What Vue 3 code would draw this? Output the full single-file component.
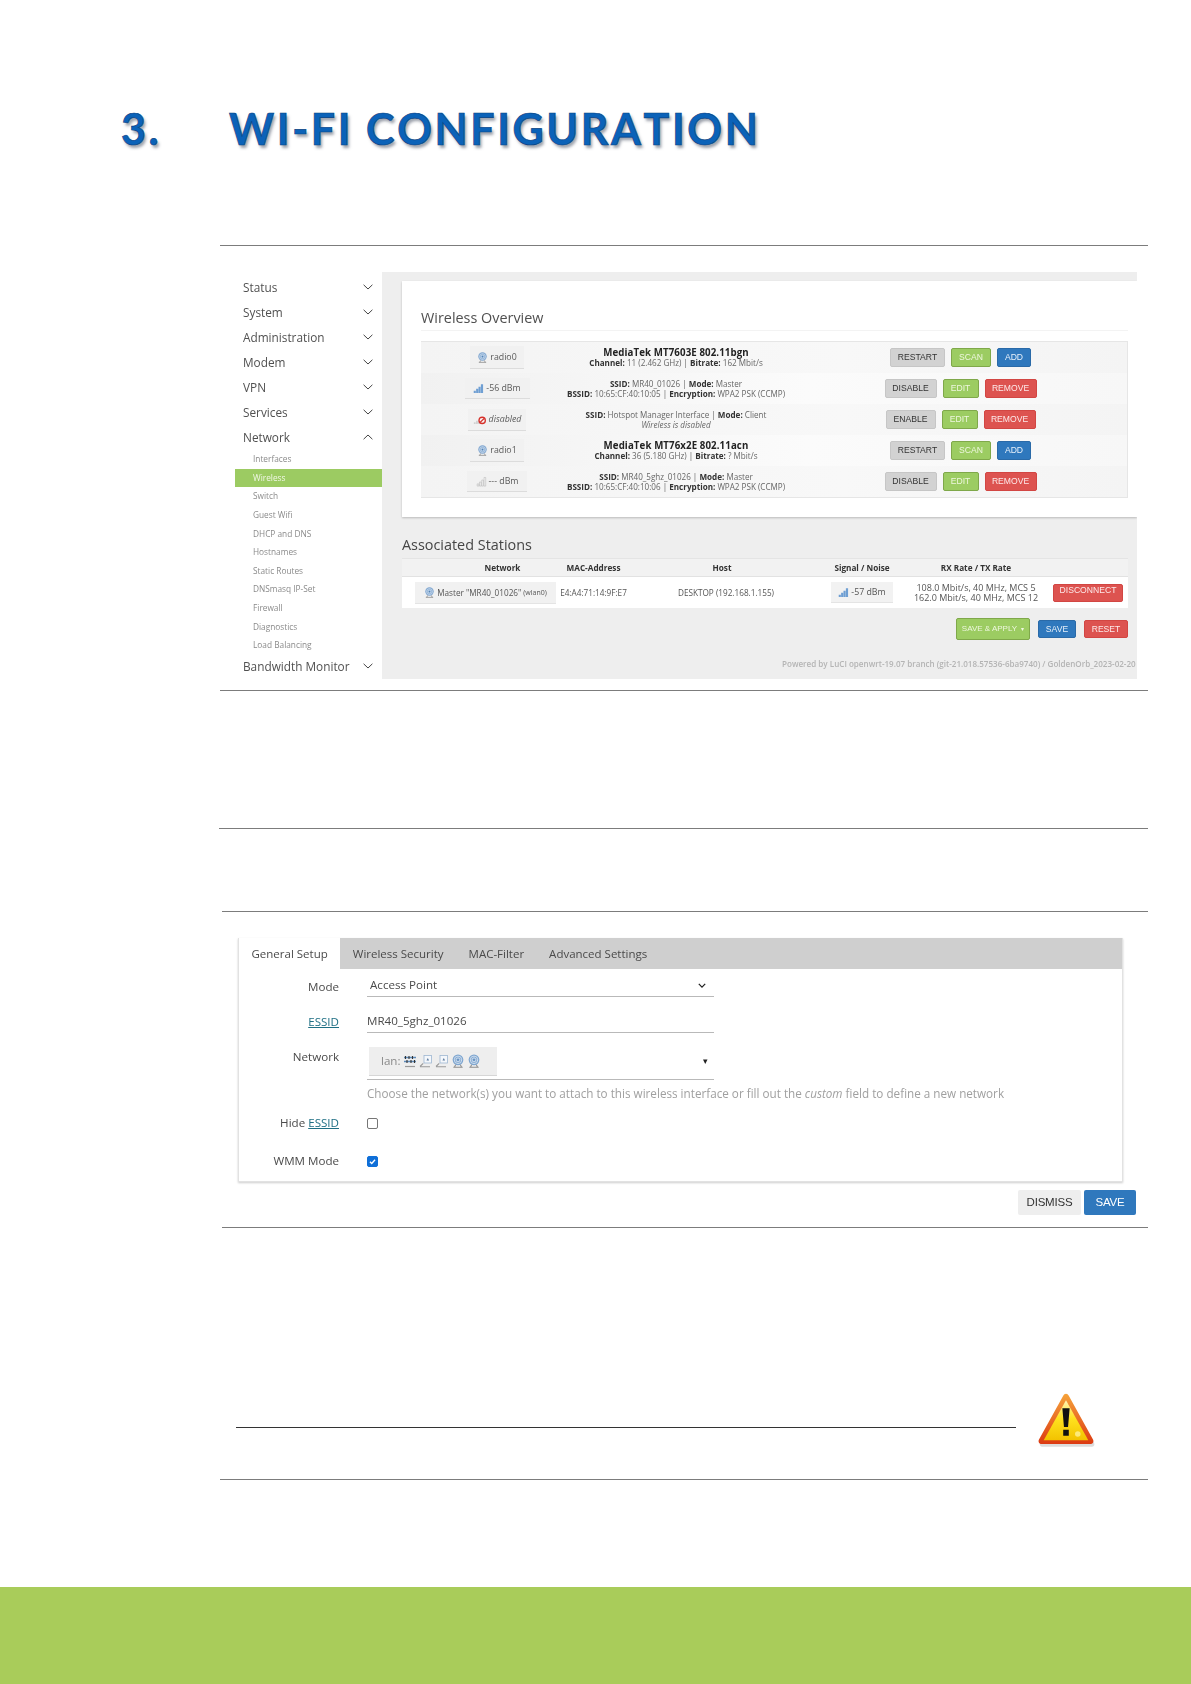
<script setup>
const topMenu = ['Status', 'System', 'Administration', 'Modem', 'VPN', 'Services']
const subMenu = ['Interfaces', 'Wireless', 'Switch', 'Guest Wifi', 'DHCP and DNS', 'Hostnames', 'Static Routes', 'DNSmasq IP-Set', 'Firewall', 'Diagnostics', 'Load Balancing']
const tabs = ['General Setup', 'Wireless Security', 'MAC-Filter', 'Advanced Settings']
const radios = [
  { kind: 'radio', icon: 'i-wifi', label: 'radio0', cls: 'b-radio', title: 'MediaTek MT7603E 802.11bgn', l2: [['Channel:', ' 11 (2.462 GHz) | '], ['Bitrate:', ' 162 Mbit/s']], btns: [['RESTART', 'gray', 55], ['SCAN', 'green', 40], ['ADD', 'blue', 34]] },
  { kind: 'ssid', icon: 'i-sig', label: '-56 dBm', cls: 'b-sig', l1: [['SSID:', ' MR40_01026 | '], ['Mode:', ' Master']], l2: [['BSSID:', ' 10:65:CF:40:10:05 | '], ['Encryption:', ' WPA2 PSK (CCMP)']], btns: [['DISABLE', 'gray', 52], ['EDIT', 'green', 36], ['REMOVE', 'red', 52]] },
  { kind: 'off', icon: 'i-off', label: 'disabled', cls: 'b-off', l1: [['SSID:', ' Hotspot Manager Interface | '], ['Mode:', ' Client']], note: 'Wireless is disabled', btns: [['ENABLE', 'gray', 50], ['EDIT', 'green', 36], ['REMOVE', 'red', 52]] },
  { kind: 'radio', icon: 'i-wifi', label: 'radio1', cls: 'b-radio', title: 'MediaTek MT76x2E 802.11acn', l2: [['Channel:', ' 36 (5.180 GHz) | '], ['Bitrate:', ' ? Mbit/s']], btns: [['RESTART', 'gray', 55], ['SCAN', 'green', 40], ['ADD', 'blue', 34]] },
  { kind: 'ssid', icon: 'i-none', label: '--- dBm', cls: 'b-none', l1: [['SSID:', ' MR40_5ghz_01026 | '], ['Mode:', ' Master']], l2: [['BSSID:', ' 10:65:CF:40:10:06 | '], ['Encryption:', ' WPA2 PSK (CCMP)']], btns: [['DISABLE', 'gray', 52], ['EDIT', 'green', 36], ['REMOVE', 'red', 52]] },
]
const lanIcons = ['i-switch', 'i-eth', 'i-eth', 'i-wifi', 'i-wifi']
</script>

<template>
  <div class="page">
    <svg class="defs" width="0" height="0" aria-hidden="true">
      <defs>
        <linearGradient id="warnFill" x1="0" y1="0" x2="0" y2="1">
          <stop offset="0" stop-color="#fff3b8" />
          <stop offset="0.45" stop-color="#ffe21f" />
          <stop offset="1" stop-color="#f2c200" />
        </linearGradient>
        <linearGradient id="warnEdge" x1="0" y1="0" x2="0" y2="1">
          <stop offset="0" stop-color="#f6a33a" />
          <stop offset="1" stop-color="#dc3a12" />
        </linearGradient>
        <symbol id="i-wifi" viewBox="0 0 12 12">
          <circle cx="6" cy="5" r="4.6" fill="#7fa6d0" />
          <circle cx="6" cy="5" r="3.2" fill="none" stroke="#dfe9f4" stroke-width=".7" />
          <circle cx="6" cy="5" r="1.7" fill="none" stroke="#dfe9f4" stroke-width=".7" />
          <circle cx="6" cy="5" r=".6" fill="#4c7cae" />
          <path d="M4 9.2 3 11.2M8 9.2l1 2M2 11.3h8" stroke="#8f8f8f" stroke-width=".9" fill="none" />
        </symbol>
        <symbol id="i-sig" viewBox="0 0 12 12">
          <path d="M.8 11V8.4h2.300V11zM3.400 11V6.400h2.300V11zM6 11V4.200h2.300V11zM8.600 11V1.400h2.400V11z" fill="#6f9fd3" />
        </symbol>
        <symbol id="i-none" viewBox="0 0 12 12">
          <path d="M1.300 11V8.600h1.800V11zM3.800 11V6.600h1.800V11zM6.300 11V4.400h1.800V11zM8.800 11V1.600h1.800V11z" fill="#f4f4f4" stroke="#b5b5b5" stroke-width=".6" />
        </symbol>
        <symbol id="i-off" viewBox="0 0 16 12">
          <path d="M1 11V9h2v2zM3.500 11V7.500h2V11zM6 11V6h2v5z" fill="#cfcfcf" />
          <circle cx="10.500" cy="7" r="3.600" fill="#f7f7f7" stroke="#d6302a" stroke-width="1.500" />
          <path d="M8 9.400l5-4.800" stroke="#d6302a" stroke-width="1.300" />
        </symbol>
        <symbol id="i-switch" viewBox="0 0 14 14">
          <path d="M1 3.500h12M1 7.500h12" stroke="#5f8cba" stroke-width="1.400" />
          <path d="M2.500 2v3M6 2v3M9.500 2v3M4 6v3M8 6v3M11.500 6v3" stroke="#333" stroke-width="1.100" />
          <path d="M2 12.500h10" stroke="#9a9a9a" stroke-width="1.200" />
        </symbol>
        <symbol id="i-eth" viewBox="0 0 14 14">
          <rect x="5" y="1.500" width="7.500" height="7.500" fill="#f4f7fb" stroke="#9db6d2" stroke-width=".8" />
          <path d="M7.500 6.500l1.300-2.500 1.300 2.500z" fill="#5f7da0" />
          <path d="M1 12.500l3.200-3.200M1 12.800h10" stroke="#9a9a9a" stroke-width="1.100" />
        </symbol>
      </defs>
    </svg>

    <h1 class="heading"><span class="heading-no">3.</span><span>WI-FI CONFIGURATION</span></h1>
    <div class="rule"></div>

    <section class="shot-one">
      <aside class="side">
        <div v-for="m in topMenu" :key="m" class="top-item">
          <span>{{ m }}</span>
          <svg class="chev" viewBox="0 0 10 6"><path d="M.6.8 5 5 9.400.8" /></svg>
        </div>
        <div class="top-item">
          <span>Network</span>
          <svg class="chev" viewBox="0 0 10 6"><path d="M.6 5.200 5 1l4.400 4.200" /></svg>
        </div>
        <div class="subs">
          <div v-for="s in subMenu" :key="s" class="sub-item" :class="{ active: s === 'Wireless' }">{{ s }}</div>
        </div>
        <div class="top-item">
          <span>Bandwidth Monitor</span>
          <svg class="chev" viewBox="0 0 10 6"><path d="M.6.8 5 5 9.400.8" /></svg>
        </div>
      </aside>

      <main class="main">
        <div class="card">
          <h2 class="card-title">Wireless Overview</h2>
          <div class="radio-table">
            <div v-for="(r, i) in radios" :key="i" class="radio-row">
              <div class="cell-badge">
                <span class="badge" :class="r.cls">
                  <svg class="badge-icon" :class="{ wide: r.kind === 'off' }"><use :href="'#' + r.icon" /></svg>
                  <span :class="{ em: r.kind === 'off' }">{{ r.label }}</span>
                </span>
              </div>
              <div class="cell-info">
                <div v-if="r.title" class="radio-name">{{ r.title }}</div>
                <div v-else class="info-line"><template v-for="p in r.l1" :key="p[0]"><b>{{ p[0] }}</b>{{ p[1] }}</template></div>
                <div v-if="r.l2" class="info-line"><template v-for="p in r.l2" :key="p[0]"><b>{{ p[0] }}</b>{{ p[1] }}</template></div>
                <div v-if="r.note" class="info-line em">{{ r.note }}</div>
              </div>
              <div class="cell-actions">
                <span v-for="b in r.btns" :key="b[0]" class="btn" :class="b[1]" :style="{ width: b[2] + 'px' }">{{ b[0] }}</span>
              </div>
            </div>
          </div>
        </div>

        <h2 class="assoc-title">Associated Stations</h2>
        <div class="assoc">
          <div class="assoc-head">
            <span class="c-net">Network</span>
            <span class="c-mac">MAC-Address</span>
            <span class="c-host">Host</span>
            <span class="c-sig">Signal / Noise</span>
            <span class="c-rate">RX Rate / TX Rate</span>
            <span></span>
          </div>
          <div class="assoc-row">
            <span class="c-station"><span class="master"><svg class="badge-icon"><use href="#i-wifi" /></svg>Master "MR40_01026" <small>(wlan0)</small></span></span>
            <span class="c-mac">E4:A4:71:14:9F:E7</span>
            <span class="c-host host-value">DESKTOP (192.168.1.155)</span>
            <span class="c-sig"><span class="sig-box"><svg class="badge-icon"><use href="#i-sig" /></svg>-57 dBm</span></span>
            <span class="c-rate rates">108.0 Mbit/s, 40 MHz, MCS 5<br />162.0 Mbit/s, 40 MHz, MCS 12</span>
            <span class="c-disc"><span class="btn red disc">DISCONNECT</span></span>
          </div>
        </div>
        <div class="page-actions">
          <span class="btn green apply">SAVE &amp; APPLY <i class="caret">▾</i></span>
          <span class="btn blue act-save">SAVE</span>
          <span class="btn red act-reset">RESET</span>
        </div>
        <div class="powered">Powered by LuCI openwrt-19.07 branch (git-21.018.57536-6ba9740) / GoldenOrb_2023-02-20</div>
      </main>
    </section>

    <div class="rule r2"></div>
    <div class="rule r3"></div>
    <div class="rule r4"></div>

    <section class="shot-two">
      <div class="panel">
        <div class="tabs">
          <span v-for="(t, i) in tabs" :key="t" class="tab" :class="{ current: i === 0 }">{{ t }}</span>
        </div>
        <div class="form">
          <div class="f-row mode">
            <label>Mode</label>
            <div class="field"><span>Access Point</span>
              <svg class="sel-chev" viewBox="0 0 10 6"><path d="M1 1l4 4 4-4" /></svg>
            </div>
          </div>
          <div class="f-row essid">
            <label><u>ESSID</u></label>
            <div class="field plain">MR40_5ghz_01026</div>
          </div>
          <div class="f-row network">
            <label>Network</label>
            <div class="field net-field">
              <span class="lan-box">lan:<svg v-for="(ic, i) in lanIcons" :key="i" class="lan-icon"><use :href="'#' + ic" /></svg></span>
              <i class="net-caret">▾</i>
            </div>
          </div>
          <div class="help">Choose the network(s) you want to attach to this wireless interface or fill out the <em>custom</em> field to define a new network</div>
          <div class="f-row check hide">
            <label>Hide <u>ESSID</u></label>
            <span class="cb"></span>
          </div>
          <div class="f-row check wmm">
            <label>WMM Mode</label>
            <span class="cb on"><svg viewBox="0 0 12 12"><path d="M2.600 6.200 5 8.600l4.400-5" /></svg></span>
          </div>
        </div>
      </div>
      <div class="modal-actions">
        <span class="m-btn dismiss">DISMISS</span>
        <span class="m-btn save">SAVE</span>
      </div>
    </section>

    <div class="rule r5"></div>

    <div class="warn-row">
      <div class="warn-line"></div>
      <svg class="warn" viewBox="0 0 56 56">
        <path d="M28 4 53 47a2.500 2.500 0 0 1-2.200 4H5.200A2.500 2.500 0 0 1 3 47z" fill="#b9b9b9" opacity=".5" transform="translate(1 2)" />
        <path d="M28 3.500c1.200 0 2 .7 2.600 1.800l22.600 41c1 2 0 4.200-2.400 4.200H5.200c-2.400 0-3.400-2.200-2.400-4.200l22.600-41c.6-1.100 1.400-1.800 2.600-1.800z" fill="url(#warnEdge)" />
        <path d="M28 9.500 48.800 47H7.200z" fill="url(#warnFill)" />
        <path d="M24.600 17h6.800l-1.500 17.500h-3.800zM25.400 37h5.200v5.600h-5.200z" fill="#111" />
        <circle cx="39" cy="41" r="2.600" fill="#fff6a8" opacity=".7" />
      </svg>
    </div>

    <div class="rule r6"></div>
    <footer class="band"></footer>
  </div>
</template>

<style scoped>
.page { width: 1191px; height: 1684px; overflow: hidden; background: #fff; display: flex; flex-direction: column; font-family: "Open Sans", "Liberation Sans", sans-serif; color: #444; }
.defs { display: block; height: 0; width: 0; }

.heading { margin: 0; padding: 104px 0 0 121px; height: 245px; flex: none; box-sizing: border-box; display: flex; font: 700 43px/50px Lato, "Open Sans", sans-serif; letter-spacing: 2.6px; font-kerning: none; color: #0b62b8; -webkit-text-stroke: .7px #0a4486; text-shadow: 2px 3px 3px rgba(60, 70, 90, .5); }
.heading-no { width: 108px; }

.rule { height: 1px; background: #7c7c7c; margin-left: 220px; width: 928px; flex: none; }
.r2 { margin-top: 11px; }
.r3 { margin-top: 137px; margin-left: 219px; width: 929px; }
.r4 { margin-top: 82px; margin-left: 222px; width: 926px; }
.r5 { margin-top: 12px; margin-left: 222px; width: 926px; }
.r6 { margin-top: 30px; }

.shot-one { margin: 26px 0 0 235px; width: 902px; height: 407px; display: flex; flex: none; overflow: hidden; filter: blur(.3px); }
.side { width: 147px; flex: none; background: #fff; padding-top: 3px; box-sizing: border-box; }
.top-item { height: 24.9px; padding: 0 9px 0 8px; display: flex; align-items: center; justify-content: space-between; font-size: 11.8px; color: #505050; }
.chev { width: 10px; height: 6px; fill: none; stroke: #444; stroke-width: 1; }
.subs { padding-top: 1px; margin-bottom: -1px; }
.sub-item { height: 18.6px; line-height: 18.6px; padding-left: 18px; font-size: 8.3px; color: #8a8a8a; }
.sub-item.active { background: #9ccb62; color: #f1f7e6; }

.main { flex: 1; min-width: 0; background: #eee; padding: 9px 0 0 20px; box-sizing: border-box; }
.card { height: 236px; background: #fff; padding: 26px 9px 0 19px; box-sizing: border-box; box-shadow: 0 1px 2px rgba(0, 0, 0, .22); }
.card-title { margin: 0 0 10px; padding-bottom: 4px; height: 24px; box-sizing: border-box; border-bottom: 1px solid #f3f3f3; font-size: 14.4px; line-height: 22px; font-weight: 400; color: #505050; }
.radio-table { background: #f5f5f5; border: 1px solid #e6e6e6; border-width: 1px 1px 1px 0; }
.radio-row { height: 31px; display: grid; grid-template-columns: 152px 206px 1fr; align-items: center; background: linear-gradient(90deg, #f4f4f4, #f8f8f8 60%, #f4f4f4); }
.radio-row:nth-child(even) { background: linear-gradient(90deg, #f1f1f1, #fbfbfb 55%, #f7f7f7); }
.cell-badge { display: flex; justify-content: center; }
.badge { display: flex; align-items: center; justify-content: center; gap: 2px; background: #f1f1f1; border-bottom: 1px solid #dcdcdc; font-size: 8.8px; color: #5a5a5a; }
.b-radio { width: 54px; height: 22px; }
.b-sig { width: 65px; height: 20px; }
.b-off { width: 58px; height: 21px; }
.b-none { width: 60px; height: 20px; }
.badge-icon { width: 11px; height: 11px; flex: none; }
.badge-icon.wide { width: 14px; }
.em { font-style: italic; }
.cell-info { display: flex; flex-direction: column; align-items: center; white-space: nowrap; color: #666; }
.radio-name { font-size: 9.7px; line-height: 11.5px; font-weight: 700; color: #222; letter-spacing: .1px; }
.info-line { font-size: 8.1px; line-height: 10px; }
.info-line b { color: #333; font-weight: 700; }
.cell-actions { display: flex; justify-content: center; gap: 6px; padding-left: 15px; }
.btn { display: flex; align-items: center; justify-content: center; box-sizing: border-box; height: 19px; border-radius: 2px; font: 400 8.6px/1 "Liberation Sans", sans-serif; }
.gray { background: #d2d2d2; color: #333; border: 1px solid #c6c6c6; }
.green { background: #9ccc62; color: #eef7de; border: 1px solid #7fa84a; }
.blue { background: #2f78bd; color: #e6f0fa; border: 1px solid #2a6aa8; }
.red { background: #dd5350; color: #fdeaea; border: 1px solid #d24643; }

.assoc-title { margin: 18px 0 4px; height: 19px; font-size: 14.4px; line-height: 19px; font-weight: 400; color: #454545; }
.assoc { width: 726px; }
.assoc-head, .assoc-row { display: grid; grid-template-columns: 155px 73px 184px 96px 132px 86px; align-items: center; font-size: 8.2px; }
.assoc-head { height: 19px; background: #f2f2f2; border-top: 1px solid #e4e4e4; border-bottom: 1px solid #e2e2e2; box-sizing: border-box; font-weight: 700; color: #333; }
.assoc-row { height: 31px; background: #fff; color: #555; }
.c-net { padding-left: 46px; text-align: center; white-space: nowrap; }
.c-station { padding-left: 13px; white-space: nowrap; }
.c-mac { display: flex; justify-content: center; white-space: nowrap; }
.c-host { text-align: center; white-space: nowrap; }
.host-value { padding-left: 8px; }
.c-sig { display: flex; justify-content: center; white-space: nowrap; }
.c-rate { text-align: center; white-space: nowrap; }
.master { display: flex; align-items: center; gap: 2px; width: 141px; height: 21px; justify-content: center; background: #f1f1f1; border-bottom: 1px solid #e4e4e4; }
.master small { font-size: 7px; }
.sig-box { display: inline-flex; align-items: center; justify-content: center; gap: 2px; width: 62px; height: 20px; background: #f2f2f2; border-bottom: 1px solid #e4e4e4; font-size: 8.8px; }
.rates { line-height: 10px; font-size: 9px; }
.c-disc { display: flex; justify-content: flex-end; padding-right: 5px; }
.disc { width: 70px; height: 18px; padding-bottom: 4px; }
.page-actions { display: flex; justify-content: flex-end; align-items: center; gap: 8px; width: 726px; margin-top: 10px; height: 22px; }
.apply { width: 74px; height: 22px; font-size: 8px; }
.caret { font-style: normal; margin-left: 4px; font-size: 6px; }
.act-save { width: 38px; height: 18px; }
.act-reset { width: 44px; height: 18px; }
.powered { margin: 16px 0 0 380px; width: 375px; white-space: nowrap; overflow: hidden; font-size: 8.07px; line-height: 16px; font-weight: 600; color: #b4b4b4; }

.shot-two { margin: 26px 0 0 238px; width: 898px; flex: none; filter: blur(.3px); }
.panel { width: 885px; height: 244px; box-sizing: border-box; border: 1px solid #e2e2e2; border-top: 0; box-shadow: 0 1px 2px rgba(0, 0, 0, .2); background: #fff; }
.tabs { height: 31px; background: #cfcfcf; display: flex; font-size: 11.5px; color: #4a4a4a; }
.tab { padding: 0 12.5px; line-height: 31px; white-space: nowrap; }
.tab.current { background: #fff; }
.f-row { display: grid; grid-template-columns: 100px 347px; column-gap: 28px; font-size: 11.6px; color: #4a4a4a; }
.f-row label { text-align: right; line-height: 14px; }
.f-row u { color: #1f6f84; }
.field { border-bottom: 1px solid #b9b9b9; box-sizing: border-box; display: flex; align-items: flex-end; justify-content: space-between; padding: 0 8px 4px 3px; line-height: 14px; }
.mode { height: 28px; }
.mode .field { height: 28px; }
.mode label { padding-top: 11px; }
.sel-chev { width: 8px; height: 5px; fill: none; stroke: #222; stroke-width: 1.6; margin-bottom: 4px; }
.essid { height: 36px; }
.essid label { padding-top: 18px; }
.plain { padding-left: 0; }
.network { height: 47px; }
.network label { padding-top: 17px; }
.net-field { padding: 14px 6px 4px 2px; align-items: flex-start; height: 47px; }
.lan-box { display: flex; align-items: center; gap: 2px; width: 128px; height: 29px; box-sizing: border-box; padding-left: 12px; background: #eee; border-bottom: 1px solid #d6d6d6; color: #8a8a8a; font-size: 11.6px; }
.lan-icon { width: 14px; height: 14px; flex: none; }
.net-caret { font-style: normal; font-size: 9px; color: #222; margin-top: 7px; }
.help { margin: 6px 0 0 128px; height: 14px; line-height: 14px; font-size: 11.7px; color: #a0a0a0; white-space: nowrap; }
.check { align-items: center; height: 38px; }
.hide { margin-top: 4px; height: 38px; }
.cb { display: block; width: 11px; height: 11px; box-sizing: border-box; border: 1px solid #767676; border-radius: 2px; background: #fff; }
.cb.on { background: #0f6fd8; border-color: #0f6fd8; }
.cb svg { display: block; width: 9px; height: 9px; fill: none; stroke: #fff; stroke-width: 1.8; }
.modal-actions { display: flex; justify-content: flex-end; gap: 3px; margin-top: 8px; }
.m-btn { height: 25px; text-align: center; font: 400 11.5px/25px "Liberation Sans", sans-serif; border-radius: 2px; letter-spacing: -.2px; }
.dismiss { width: 63px; background: #eee; color: #333; }
.save { width: 52px; background: #2f78bd; color: #fff; }

.warn-row { margin: 165px 0 0 236px; display: flex; height: 56px; flex: none; }
.warn-line { width: 780px; height: 1px; background: #333; margin-top: 34px; }
.warn { width: 60px; height: 60px; margin: -3px 0 0 20px; }
.band { margin-top: 107px; height: 97px; flex: none; background: #a9cc5a; }
</style>
